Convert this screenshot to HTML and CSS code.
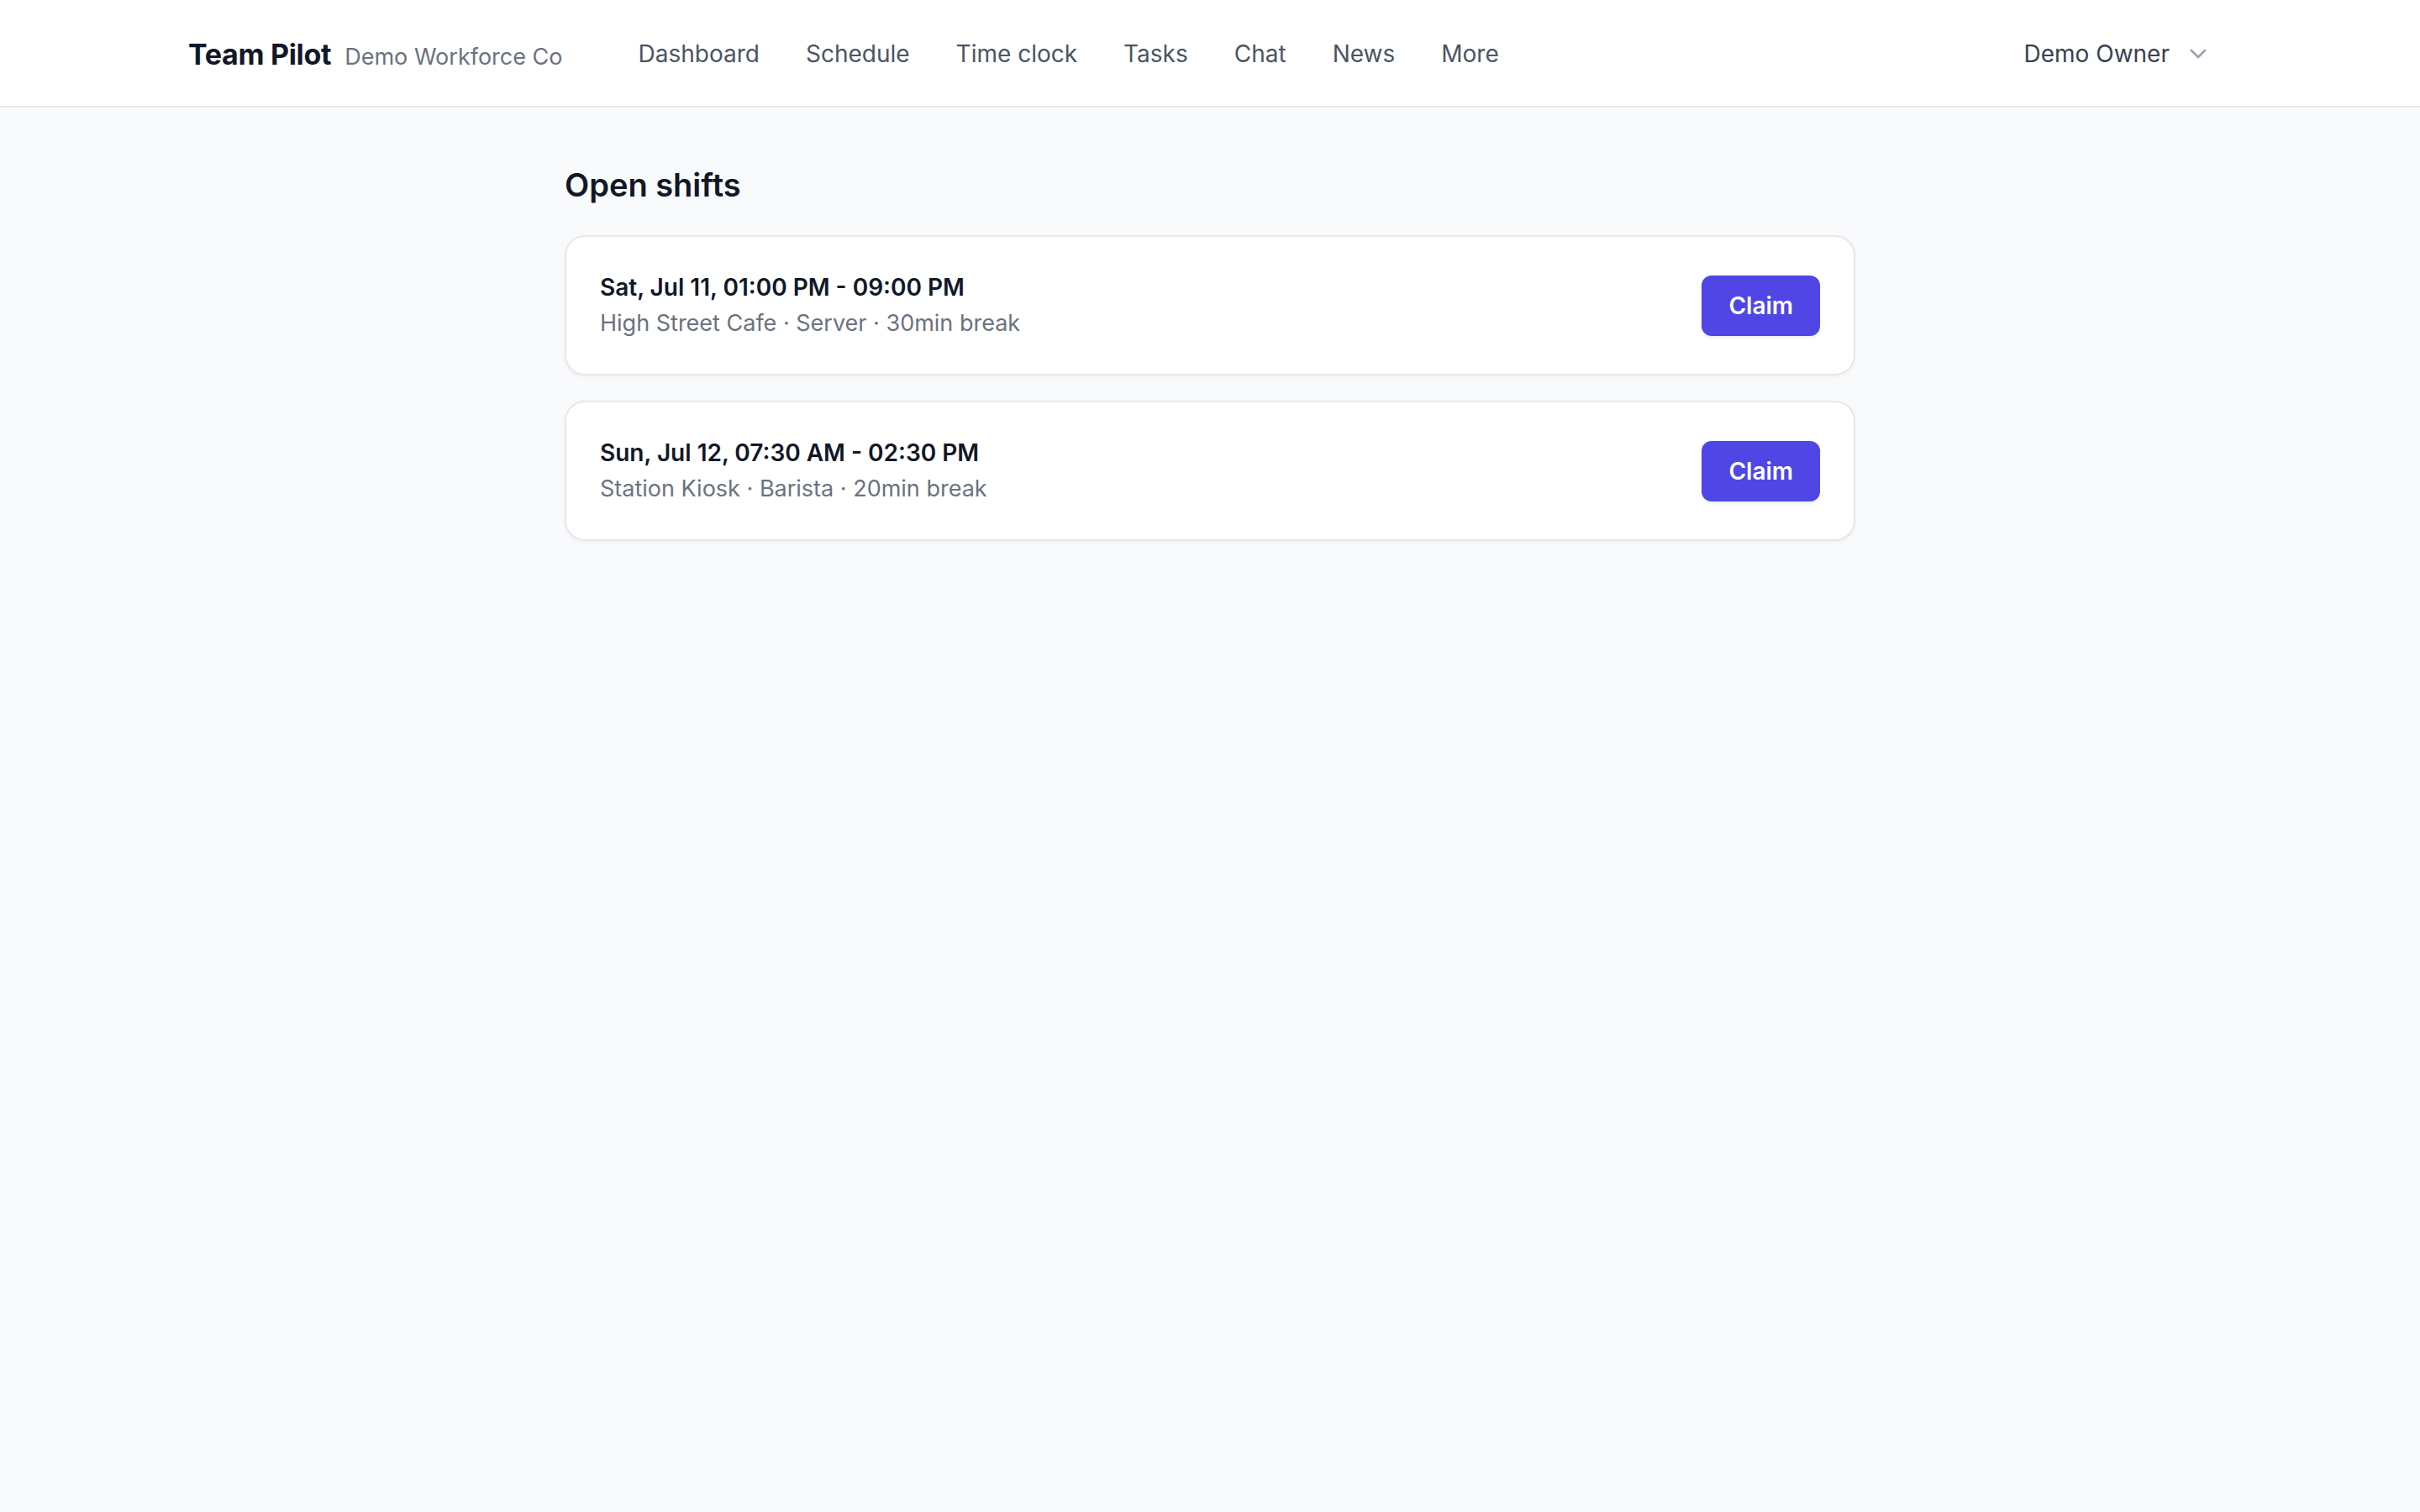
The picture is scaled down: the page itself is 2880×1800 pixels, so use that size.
FILE: index.html
```html
<!DOCTYPE html>
<html lang="en">
<head>
    <meta charset="UTF-8">
    <meta name="viewport" content="width=device-width, initial-scale=1.0">
    <title>Open shifts - Team Pilot</title>
    <link rel="stylesheet" href="styles.css">
</head>
<body>
    <header class="topbar">
        <div class="topbar-inner">
            <div class="brand">
                <span class="brand-name">Team Pilot</span>
                <span class="brand-org">Demo Workforce Co</span>
            </div>
            <nav class="main-nav">
                <a href="#">Dashboard</a>
                <a href="#">Schedule</a>
                <a href="#">Time clock</a>
                <a href="#">Tasks</a>
                <a href="#">Chat</a>
                <a href="#">News</a>
                <a href="#">More</a>
            </nav>
            <button class="user-menu">
                <span>Demo Owner</span>
                <svg class="chevron" viewBox="0 0 20 20" fill="none" stroke="currentColor" stroke-width="1.5" stroke-linecap="round" stroke-linejoin="round">
                    <path d="M5.5 7.75 10 12.25l4.5-4.5"/>
                </svg>
            </button>
        </div>
    </header>

    <main class="page">
        <h1 class="page-title">Open shifts</h1>
        <div class="shift-list">
            <div class="shift-card">
                <div class="shift-info">
                    <div class="shift-time">Sat, Jul 11, 01:00 PM - 09:00 PM</div>
                    <div class="shift-meta">High Street Cafe · Server · 30min break</div>
                </div>
                <button class="claim-btn">Claim</button>
            </div>
            <div class="shift-card">
                <div class="shift-info">
                    <div class="shift-time">Sun, Jul 12, 07:30 AM - 02:30 PM</div>
                    <div class="shift-meta">Station Kiosk · Barista · 20min break</div>
                </div>
                <button class="claim-btn">Claim</button>
            </div>
        </div>
    </main>
</body>
</html>
```

FILE: styles.css
```css
* {
    box-sizing: border-box;
}
body {
    margin: 0;
    font-family: Inter, "Noto Sans", sans-serif;
    background-color: #f9fafb;
    color: #111827;
    min-height: 100vh;
}
.topbar {
    background-color: #ffffff;
    border-bottom: 2px solid #e5e7eb;
    height: 128px;
}
.topbar-inner {
    max-width: 2560px;
    margin: 0 auto;
    padding: 2px 64px 0;
    height: 100%;
    display: flex;
    align-items: center;
}
.brand {
    display: flex;
    align-items: baseline;
    gap: 16px;
}
.brand-name {
    font-size: 34px;
    font-weight: 700;
    color: #111827;
    letter-spacing: -0.3px;
}
.brand-org {
    font-size: 27px;
    color: #6b7280;
}
.main-nav {
    display: flex;
    gap: 55px;
    margin-left: 90px;
}
.main-nav a {
    font-size: 28px;
    color: #4b5563;
    text-decoration: none;
}
.user-menu {
    margin-left: auto;
    display: flex;
    align-items: center;
    gap: 16px;
    padding: 0 22px 0 0;
    border: none;
    background: none;
    font-family: inherit;
    font-size: 28px;
    color: #374151;
    cursor: pointer;
}
.chevron {
    width: 36px;
    height: 36px;
    color: #9ca3af;
}
.page {
    max-width: 1536px;
    margin: 0 auto;
    padding: 64px 0;
}
.page-title {
    margin: 0 0 32px;
    font-size: 38px;
    line-height: 56px;
    font-weight: 600;
    color: #111827;
}
.shift-list {
    display: flex;
    flex-direction: column;
    gap: 30px;
}
.shift-card {
    display: flex;
    align-items: center;
    justify-content: space-between;
    padding: 40px;
    background-color: #ffffff;
    border: 2px solid #e5e7eb;
    border-radius: 24px;
    box-shadow: 0 2px 4px rgba(0, 0, 0, 0.04);
}
.shift-time {
    font-size: 28px;
    line-height: 40px;
    font-weight: 600;
    color: #111827;
}
.shift-meta {
    margin-top: 3px;
    font-size: 27px;
    line-height: 40px;
    color: #6b7280;
}
.claim-btn {
    padding: 16px 32px;
    border: none;
    border-radius: 12px;
    background-color: #4f46e5;
    color: #ffffff;
    font-family: inherit;
    font-size: 28px;
    line-height: 40px;
    font-weight: 600;
    box-shadow: 0 2px 4px rgba(0, 0, 0, 0.08);
    cursor: pointer;
}
```
